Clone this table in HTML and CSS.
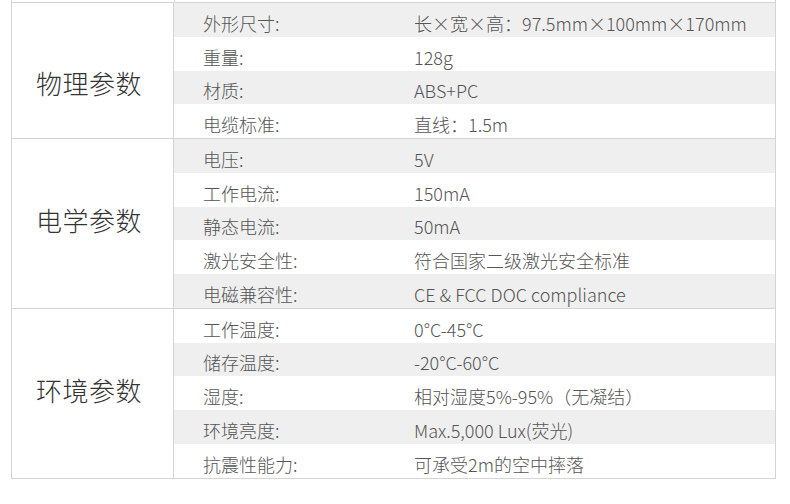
FILE: index.html
```html
<!DOCTYPE html>
<html lang="zh-CN">
<head>
<meta charset="utf-8">
<title>参数</title>
<link rel="stylesheet" href="styles.css">
</head>
<body>
<div class="spec">
  <div class="cap"><div class="cap-cat"></div></div>
  <div class="group first">
    <div class="cat">物理参数</div>
    <div class="rows">
      <div class="row alt"><span class="k">外形尺寸:</span><span class="v">长×宽×高：97.5mm×100mm×170mm</span></div>
      <div class="row"><span class="k">重量:</span><span class="v">128g</span></div>
      <div class="row alt"><span class="k">材质:</span><span class="v">ABS+PC</span></div>
      <div class="row"><span class="k">电缆标准:</span><span class="v">直线：1.5m</span></div>
    </div>
  </div>
  <div class="group">
    <div class="cat">电学参数</div>
    <div class="rows">
      <div class="row alt"><span class="k">电压:</span><span class="v">5V</span></div>
      <div class="row"><span class="k">工作电流:</span><span class="v">150mA</span></div>
      <div class="row alt"><span class="k">静态电流:</span><span class="v">50mA</span></div>
      <div class="row"><span class="k">激光安全性:</span><span class="v">符合国家二级激光安全标准</span></div>
      <div class="row alt"><span class="k">电磁兼容性:</span><span class="v">CE &amp; FCC DOC compliance</span></div>
    </div>
  </div>
  <div class="group last">
    <div class="cat">环境参数</div>
    <div class="rows">
      <div class="row"><span class="k">工作温度:</span><span class="v">0°C-45°C</span></div>
      <div class="row alt"><span class="k">储存温度:</span><span class="v">-20°C-60°C</span></div>
      <div class="row"><span class="k">湿度:</span><span class="v">相对湿度5%-95%（无凝结）</span></div>
      <div class="row alt"><span class="k">环境亮度:</span><span class="v">Max.5,000 Lux(荧光)</span></div>
      <div class="row"><span class="k">抗震性能力:</span><span class="v">可承受2m的空中摔落</span></div>
    </div>
  </div>
</div>
</body>
</html>
```
FILE: styles.css
```css
html, body {
  margin: 0;
  padding: 0;
  background: #ffffff;
}
body {
  font-family: "Noto Sans CJK SC", "Noto Sans", sans-serif;
  color: #555555;
}
.spec {
  margin-left: 11px;
  width: 763px;
  border-left: 1px solid #d4d4d4;
  border-right: 1px solid #d4d4d4;
}
.cap {
  height: 2px;
  display: flex;
}
.cap-cat {
  width: 162px;
  border-right: 1px solid #d4d4d4;
}
.group {
  display: flex;
  border-top: 1px solid #d4d4d4;
}
.group.last {
  border-bottom: 1px solid #d4d4d4;
}
.cat {
  box-sizing: border-box;
  width: 162px;
  padding-left: 24px;
  padding-bottom: 8px;
  border-right: 1px solid #d4d4d4;
  display: flex;
  align-items: center;
  font-size: 26px;
  font-weight: 300;
  color: #333333;
  letter-spacing: 0.5px;
}
.group.first .cat {
  padding-top: 32px;
}
.rows {
  flex: 1;
}
.row {
  height: 33.75px;
  box-sizing: border-box;
  padding-left: 29px;
  padding-top: 6px;
  display: flex;
  align-items: center;
  font-size: 18px;
  font-weight: 300;
  white-space: nowrap;
}
.row.alt {
  background: #efefef;
}
.k {
  width: 211px;
  flex: none;
}
.v {
  flex: none;
}
```
